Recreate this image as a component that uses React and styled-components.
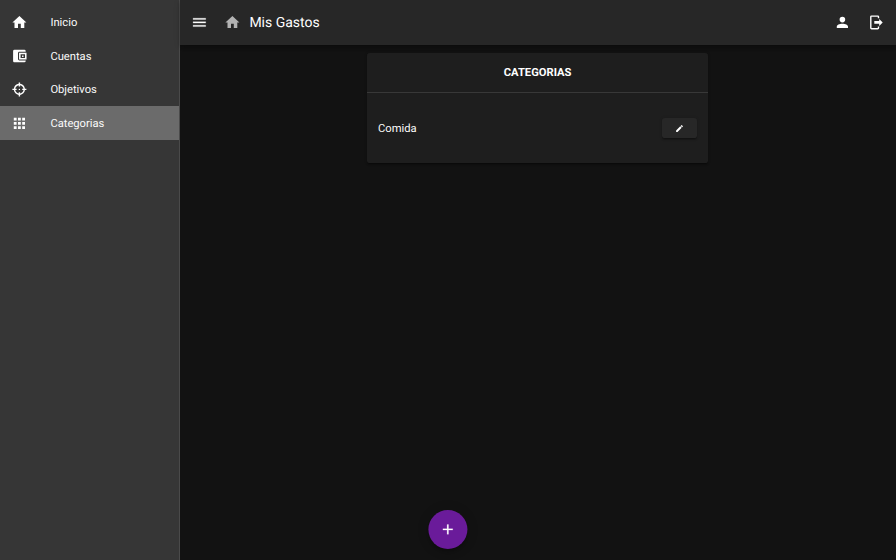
import React from "react";
import styled, { createGlobalStyle } from "styled-components";

const GlobalStyle = createGlobalStyle`
  *, *::before, *::after { box-sizing: border-box; }
  body {
    margin: 0;
    background: #121212;
    color: #fff;
    font-family: Roboto, sans-serif;
    font-size: 11.2px;
    text-rendering: geometricPrecision;
    overflow: hidden;
  }
  button { font: inherit; color: inherit; border: 0; padding: 0; cursor: pointer; }
`;

const paths = {
  home: "M10,20V14H14V20H19V12H22L12,3L2,12H5V20H10Z",
  wallet:
    "M21,17.8V18.5A2,2 0 0,1 19,20.5H5C3.89,20.5 3,19.6 3,18.5V4.5A2,2 0 0,1 5,2.5H19A2,2 0 0,1 21,4.5V5.4H12C10.89,5.4 10,6.3 10,7.4V15.8A2,2 0 0,0 12,17.8M11.5,16.5H22.2V6.8H11.5M13.7,9H20V14.3H13.7M15.8,10.6V12.7H17.9V10.6Z",
  target:
    "M11,2V4.07C7.38,4.53 4.53,7.38 4.07,11H2V13H4.07C4.53,16.62 7.38,19.47 11,19.93V22H13V19.93C16.62,19.47 19.47,16.62 19.93,13H22V11H19.93C19.47,7.38 16.62,4.53 13,4.07V2M11,6.08V8H13V6.09C15.5,6.5 17.5,8.5 17.92,11H16V13H17.91C17.5,15.5 15.5,17.5 13,17.92V16H11V17.91C8.5,17.5 6.5,15.5 6.08,13H8V11H6.09C6.5,8.5 8.5,6.5 11,6.08M12,11A1,1 0 0,0 11,12A1,1 0 0,0 12,13A1,1 0 0,0 13,12A1,1 0 0,0 12,11Z",
  apps: "M16,20H20V16H16M16,14H20V10H16M10,8H14V4H10M16,8H20V4H16M10,14H14V10H10M4,14H8V10H4M4,20H8V16H4M10,20H14V16H10M4,8H8V4H4V8Z",
  menu: "M3,6H21V8H3V6M3,11H21V13H3V11M3,16H21V18H3V16Z",
  account:
    "M12,4A4,4 0 0,1 16,8A4,4 0 0,1 12,12A4,4 0 0,1 8,8A4,4 0 0,1 12,4M12,14C16.42,14 20,15.79 20,18V20H4V18C4,15.79 7.58,14 12,14Z",
  logout:
    "M16,17V14H9V10H16V7L21,12L16,17M14,2A2,2 0 0,1 16,4V6H14V4H5V20H14V18H16V20A2,2 0 0,1 14,22H5A2,2 0 0,1 3,20V4A2,2 0 0,1 5,2H14Z",
  pencil:
    "M20.71,7.04C21.1,6.65 21.1,6 20.71,5.63L18.37,3.29C18,2.9 17.35,2.9 16.96,3.29L15.12,5.12L18.87,8.87M3,17.25V21H6.75L17.81,9.93L14.06,6.18L3,17.25Z",
  plus: "M19,13H13V19H11V13H5V11H11V5H13V11H19V13Z",
};

const Glyph = styled.svg`
  display: block;
  flex: none;
  width: ${(p) => p.$size}px;
  height: ${(p) => p.$size}px;
  overflow: visible;
  fill: ${(p) => (p.$muted ? "#b3b3b3" : "#fff")};
  fill-rule: evenodd;
  stroke: ${(p) => (p.$muted ? "#b3b3b3" : "#fff")};
  stroke-width: ${(p) => p.$weight};
`;

const Icon = ({ name, size = 16.8, muted, weight = 0 }) => (
  <Glyph viewBox="0 0 24 24" $size={size} $muted={muted} $weight={weight} aria-hidden="true">
    <path d={paths[name]} />
  </Glyph>
);

const Layout = styled.div`
  display: flex;
  height: 100vh;
`;

const Drawer = styled.nav`
  flex: none;
  width: 179.6px;
  padding-top: 5.6px;
  background: #363636;
  border-right: 1px solid #4a4a4a;
`;

const NavItem = styled.a`
  display: flex;
  align-items: center;
  gap: 22.4px;
  height: 33.6px;
  padding: 0 11.2px;
  background: ${(p) => (p.$active ? "#6b6b6b" : "transparent")};
`;

const Label = styled.span`
  color: #fafafa;
  line-height: 16px;
  padding-top: 1.6px;
`;

const Main = styled.div`
  flex: 1;
  display: flex;
  flex-direction: column;
  min-width: 0;
`;

const AppBar = styled.header`
  flex: none;
  display: flex;
  align-items: center;
  height: 44.8px;
  padding: 0 11.2px 0 11px;
  background: #272727;
  box-shadow: 0 1.4px 2.8px -0.7px rgba(0, 0, 0, 0.2), 0 2.8px 3.5px rgba(0, 0, 0, 0.14),
    0 0.7px 7px rgba(0, 0, 0, 0.12);
`;

const IconButton = styled.button`
  display: grid;
  place-items: center;
  width: 16.8px;
  height: 33.6px;
  background: none;
`;

const Brand = styled.div`
  display: flex;
  align-items: center;
  gap: 8.4px;
  margin-left: 16.8px;
`;

const Title = styled.h1`
  margin: 0;
  padding-top: 1.4px;
  font-size: 14px;
  font-weight: 400;
  line-height: 21px;
`;

const Actions = styled.div`
  display: flex;
  gap: 16.8px;
  margin-left: auto;
`;

const Content = styled.main`
  flex: 1;
  display: flex;
  flex-direction: column;
  align-items: center;
  padding-top: 8.4px;
`;

const Card = styled.section`
  width: 341.6px;
  height: 109.5px;
  margin-right: 0.4px;
  background: #1e1e1e;
  border-radius: 2.8px;
  box-shadow: 0 2.1px 0.7px -1.4px rgba(0, 0, 0, 0.2), 0 1.4px 1.4px rgba(0, 0, 0, 0.14),
    0 0.7px 3.5px rgba(0, 0, 0, 0.12);
`;

const CardTitle = styled.h2`
  display: grid;
  place-items: center;
  height: 40px;
  margin: 0;
  border-bottom: 1px solid #383838;
  font-size: 11.2px;
  font-weight: 700;
`;

const CategoryRow = styled.div`
  display: flex;
  align-items: center;
  justify-content: space-between;
  height: 69.8px;
  padding: 0 11.2px;
`;

const EditButton = styled.button`
  display: grid;
  place-items: center;
  width: 35px;
  height: 19.6px;
  background: #272727;
  border-radius: 2.8px;
  box-shadow: 0 2.1px 0.7px -1.4px rgba(0, 0, 0, 0.2), 0 1.4px 1.4px rgba(0, 0, 0, 0.14),
    0 0.7px 3.5px rgba(0, 0, 0, 0.12);
`;

const AddButton = styled.button`
  position: fixed;
  left: 50%;
  bottom: 11.2px;
  display: grid;
  place-items: center;
  width: 39.2px;
  height: 39.2px;
  transform: translateX(-50%);
  border-radius: 50%;
  background: #6a1b9a;
  box-shadow: 0 2.1px 3.5px -0.7px rgba(0, 0, 0, 0.2), 0 4.2px 7px rgba(0, 0, 0, 0.14),
    0 0.7px 12.6px rgba(0, 0, 0, 0.12);
`;

const links = [
  { icon: "home", label: "Inicio" },
  { icon: "wallet", label: "Cuentas" },
  { icon: "target", label: "Objetivos" },
  { icon: "apps", label: "Categorias", active: true },
];

const categories = ["Comida"];

export default function App() {
  return (
    <>
      <GlobalStyle />
      <Layout>
        <Drawer>
          {links.map(({ icon, label, active }) => (
            <NavItem key={label} $active={active}>
              <Icon name={icon} />
              <Label>{label}</Label>
            </NavItem>
          ))}
        </Drawer>
        <Main>
          <AppBar>
            <IconButton aria-label="Menu">
              <Icon name="menu" weight={0.4} />
            </IconButton>
            <Brand>
              <Icon name="home" muted />
              <Title>Mis Gastos</Title>
            </Brand>
            <Actions>
              <IconButton aria-label="Cuenta">
                <Icon name="account" />
              </IconButton>
              <IconButton aria-label="Salir">
                <Icon name="logout" />
              </IconButton>
            </Actions>
          </AppBar>
          <Content>
            <Card>
              <CardTitle>CATEGORIAS</CardTitle>
              {categories.map((name) => (
                <CategoryRow key={name}>
                  <Label>{name}</Label>
                  <EditButton aria-label="Editar">
                    <Icon name="pencil" size={9} />
                  </EditButton>
                </CategoryRow>
              ))}
            </Card>
          </Content>
        </Main>
      </Layout>
      <AddButton aria-label="Agregar">
        <Icon name="plus" weight={0.3} />
      </AddButton>
    </>
  );
}
